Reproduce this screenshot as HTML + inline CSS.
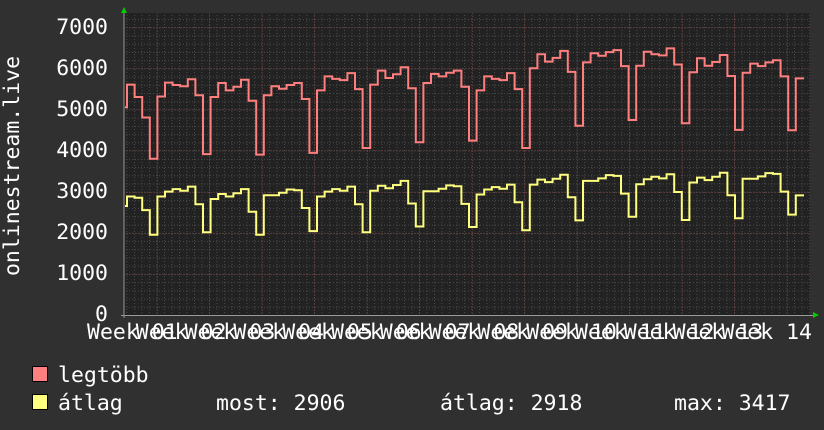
<!DOCTYPE html>
<html><head><meta charset="utf-8"><style>
html,body{margin:0;padding:0;background:#303030;}
svg{display:block}
text{font-family:"DejaVu Sans Mono","Liberation Mono",monospace;fill:#fff;font-size:21.5px}
</style></head><body>
<svg id="s" width="824" height="430" viewBox="0 0 824 430" xmlns="http://www.w3.org/2000/svg">
<defs>
<pattern id="minx" x="126.5" y="0" width="7.5" height="430" patternUnits="userSpaceOnUse">
<line x1="0.5" y1="0" x2="0.5" y2="430" stroke="#4a4a4a" stroke-width="1" stroke-dasharray="1,2"/></pattern>
<pattern id="miny" x="0" y="315" width="824" height="8.22" patternUnits="userSpaceOnUse">
<line x1="0" y1="0.5" x2="824" y2="0.5" stroke="#4a4a4a" stroke-width="1" stroke-dasharray="1,2"/></pattern>
</defs>
<rect x="0" y="0" width="824" height="430" fill="#303030"/>
<rect x="124" y="13" width="686" height="303" fill="#222"/>
<rect x="124" y="13" width="686" height="303" fill="url(#minx)"/>
<rect x="124" y="13" width="686" height="303" fill="url(#miny)"/>
<g id="major"></g>
<path id="red" fill="none" stroke="#ff7f7f" stroke-width="2"/>
<path id="yel" fill="none" stroke="#ffff7f" stroke-width="2"/>
<line x1="124" y1="12" x2="124" y2="318" stroke="#999" stroke-width="1"/>
<line x1="121" y1="315.5" x2="814" y2="315.5" stroke="#999" stroke-width="1"/>
<polygon points="121,13 127,13 124,7" fill="#0c0"/>
<polygon points="813,312 813,318 819,315" fill="#0c0"/>
<g text-anchor="end">
<text x="108" y="34">7000</text><text x="108" y="75">6000</text><text x="108" y="116">5000</text>
<text x="108" y="157">4000</text><text x="108" y="198">3000</text><text x="108" y="239">2000</text>
<text x="108" y="280">1000</text><text x="108" y="321">0</text>
</g>
<text transform="translate(19,166) rotate(-90)" text-anchor="middle">onlinestream.live</text>
<g id="xl"></g>
<rect x="32.5" y="366.5" width="15" height="15" fill="#ff7f7f" stroke="#000"/>
<rect x="32.5" y="394.5" width="15" height="15" fill="#ffff7f" stroke="#000"/>
<text x="58" y="382">legtöbb</text>
<text x="58" y="410">átlag</text>
<text x="216" y="410">most: 2906</text>
<text x="440" y="410">átlag: 2918</text>
<text x="674" y="410">max: 3417</text>
</svg>
<script>
function Y(v){return 315-v*0.04114;}
var mj=document.getElementById('major'),h='';
for(var k=0;k<=7;k++){var y=Math.round(Y(k*1000))+0.5;h+='<line x1="124" y1="'+y+'" x2="810" y2="'+y+'" stroke="#6a3535" stroke-dasharray="1,2"/>';}
for(var x=156.5;x<810;x+=52.5){var xx=Math.round(x)+0.5;h+='<line x1="'+xx+'" y1="13" x2="'+xx+'" y2="316" stroke="#6a3535" stroke-dasharray="1,2"/>';}
mj.innerHTML=h;
var xl='';
for(var i=0;i<14;i++){var n=(i<9?'0':'')+(i+1);xl+='<text x="'+(87+48.8*i)+'" y="339">Week '+n+'</text>';}
document.getElementById('xl').innerHTML=xl;
var rb=[5600,5650,5600,5600,5800,5900,5900,5800,6300,6400,6400,6200,6150,6150];
var yb=[2900,3000,2900,2950,3000,3100,3050,3050,3250,3300,3300,3300,3350,3350];
var rp=[-300,0,-100,-50,80,-350,-1700];
var yp=[-80,0,20,60,120,-350,-950];
function build(base,pat,pre,start,endv){
 var d='M125,'+Y(start).toFixed(1)+' L127,'+Y(start).toFixed(1);
 var x=127,day=7.6;
 var seq=pre.slice();
 for(var w=0;w<12;w++){for(var j=0;j<7;j++){seq.push(base[w+1]+pat[j]+((w*7+j)%3-1)*40);}}
 for(var i=0;i<seq.length;i++){var yy=Y(seq[i]).toFixed(1);d+=' L'+x.toFixed(1)+','+yy;x+=day;d+=' L'+x.toFixed(1)+','+yy;}
 d+=' L'+x.toFixed(1)+','+Y(endv).toFixed(1)+' L804,'+Y(endv).toFixed(1);
 return d;
}
document.getElementById('red').setAttribute('d',build(rb,rp,[5600,5300,4800,3800],5050,5750));
document.getElementById('yel').setAttribute('d',build(yb,yp,[2880,2850,2550,1950],2650,2906));
</script>
</body></html>
